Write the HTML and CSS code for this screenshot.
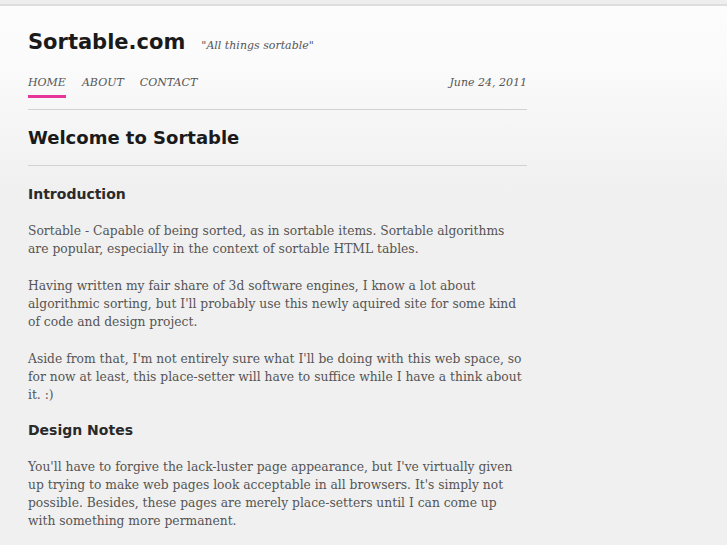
FILE: index.html
```html
<!DOCTYPE html>
<html>
<head>
<meta charset="utf-8">
<title>Sortable.com</title>
<link rel="stylesheet" href="styles.css">
</head>
<body>
<div class="topbar"></div>
<div class="page">
  <header class="masthead">
    <h1 class="site-title">Sortable.com</h1>
    <span class="tagline">"All things sortable"</span>
  </header>
  <nav class="nav">
    <ul class="menu">
      <li><a class="active" href="#">HOME</a></li>
      <li><a href="#">ABOUT</a></li>
      <li><a href="#">CONTACT</a></li>
    </ul>
    <span class="date">June 24, 2011</span>
  </nav>
  <main class="content">
    <h2 class="page-title">Welcome to Sortable</h2>
    <h3 class="section">Introduction</h3>
    <p>Sortable - Capable of being sorted, as in sortable items. Sortable algorithms are popular, especially in the context of sortable HTML tables.</p>
    <p>Having written my fair share of 3d software engines, I know a lot about algorithmic sorting, but I'll probably use this newly aquired site for some kind of code and design project.</p>
    <p>Aside from that, I'm not entirely sure what I'll be doing with this web space, so for now at least, this place-setter will have to suffice while I have a think about it. :)</p>
    <h3 class="section">Design Notes</h3>
    <p>You'll have to forgive the lack-luster page appearance, but I've virtually given up trying to make web pages look acceptable in all browsers. It's simply not possible. Besides, these pages are merely place-setters until I can come up with something more permanent.</p>
  </main>
</div>
</body>
</html>
```
FILE: styles.css
```css
html, body {
  margin: 0;
  padding: 0;
}
body {
  background: #f0f0f0 linear-gradient(to bottom, #fcfcfc 6px, #fbfbfb 60px, #f0f0f0 190px) no-repeat;
  background-size: 100% 545px;
  font-family: "DejaVu Serif", serif;
  color: #555;
  height: 545px;
  overflow: hidden;
}
.topbar {
  height: 4px;
  background: #eeeeee;
  border-bottom: 2px solid #dedede;
}
.page {
  width: 499px;
  padding-left: 28px;
}
.masthead {
  display: flex;
  align-items: baseline;
  padding-top: 22px;
  height: 28px;
}
.site-title {
  margin: 0;
  font-family: "DejaVu Sans", sans-serif;
  font-weight: bold;
  font-size: 21px;
  color: #1a1a1a;
  line-height: 28px;
}
.tagline {
  margin-left: 16px;
  font-style: italic;
  font-size: 11px;
  color: #555;
}
.nav {
  display: flex;
  justify-content: space-between;
  align-items: flex-start;
  margin-top: 20px;
  border-bottom: 1px solid #d2d2d2;
  height: 33px;
}
.menu {
  display: flex;
  gap: 16px;
  list-style: none;
  margin: 0;
  padding: 0;
}
.menu a {
  display: block;
  font-style: italic;
  font-size: 11px;
  color: #555;
  text-decoration: none;
  line-height: 13px;
  padding-bottom: 6px;
  border-bottom: 3px solid transparent;
}
.menu a.active {
  border-bottom-color: #e8359a;
}
.date {
  font-style: italic;
  font-size: 11px;
  line-height: 13px;
  color: #555;
}
.page-title {
  margin: 0 0 16px;
  font-family: "DejaVu Sans", sans-serif;
  font-weight: bold;
  font-size: 18px;
  color: #1a1a1a;
  line-height: 55px;
  border-bottom: 1px solid #d2d2d2;
}
.section {
  margin: 14px 0 16px;
  font-family: "DejaVu Sans", sans-serif;
  font-weight: bold;
  font-size: 14px;
  color: #2a2a2a;
  line-height: 24px;
}
.content p {
  margin: 0;
  font-size: 12.3px;
  line-height: 18px;
}
.content p + p {
  margin-top: 19px;
}
```
